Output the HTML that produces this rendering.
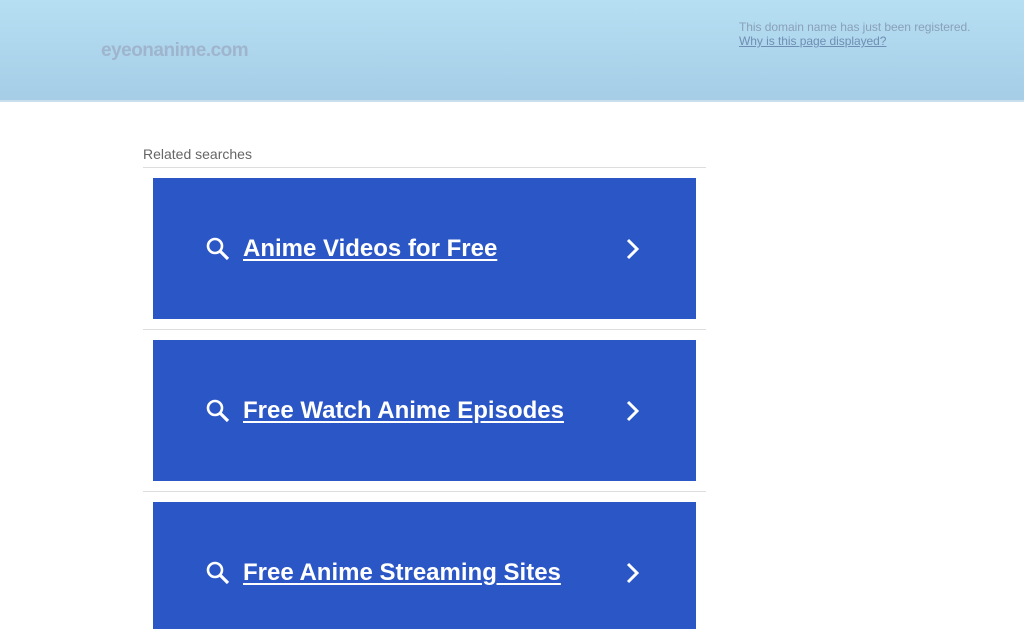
<!DOCTYPE html>
<html style="overflow:hidden;height:629px"><head><style>
body{margin:0;width:1024px;height:629px;overflow:hidden;background:#fff;font-family:"Liberation Sans",Arial,sans-serif;position:relative;}
.hdr{position:absolute;left:0;top:0;width:1024px;height:100px;background:linear-gradient(#b6dff3,#a5cde6);border-bottom:2px solid #c9dfee;}
.logo{position:absolute;left:101px;top:40px;font-size:19px;font-weight:bold;color:#9fb5ce;letter-spacing:-0.5px;}
.info{position:absolute;left:739px;top:20px;font-size:12px;line-height:14px;color:#8aa0b8;letter-spacing:-0.05px;}
.info a{color:#6f8eb3;text-decoration:underline;}
.rel{position:absolute;left:143px;top:146px;font-size:14px;color:#666;}
.line{position:absolute;left:143px;width:563px;height:1px;background:#ddd;}
.card{position:absolute;left:153px;width:543px;height:141px;background:#2b56c6;overflow:hidden;}
.card .t{position:absolute;left:90px;top:57px;font-size:24px;font-weight:bold;color:#fff;text-decoration:underline;text-underline-offset:3px;}
.card svg{position:absolute}
</style></head><body>
<div class="hdr"><div class="logo">eyeonanime.com</div>
<div class="info">This domain name has just been registered.<br><a>Why is this page displayed?</a></div></div>
<div class="rel">Related searches</div>
<div class="line" style="top:167px"></div>
<div class="line" style="top:329px"></div>
<div class="line" style="top:491px"></div>
<div class="card" style="top:178px"><svg style="left:52px;top:58px" width="26" height="26" viewBox="0 0 26 26"><circle cx="10" cy="10" r="7" fill="none" stroke="#fff" stroke-width="2.6"/><path d="M15 15l8 8" stroke="#fff" stroke-width="3.2"/></svg><div class="t">Anime Videos for Free</div><svg style="left:472px;top:60px" width="16" height="22" viewBox="0 0 16 22"><path d="M3 2l9 9-9 9" fill="none" stroke="#fff" stroke-width="3"/></svg></div>
<div class="card" style="top:340px"><svg style="left:52px;top:58px" width="26" height="26" viewBox="0 0 26 26"><circle cx="10" cy="10" r="7" fill="none" stroke="#fff" stroke-width="2.6"/><path d="M15 15l8 8" stroke="#fff" stroke-width="3.2"/></svg><div class="t">Free Watch Anime Episodes</div><svg style="left:472px;top:60px" width="16" height="22" viewBox="0 0 16 22"><path d="M3 2l9 9-9 9" fill="none" stroke="#fff" stroke-width="3"/></svg></div>
<div class="card" style="top:502px;height:127px"><svg style="left:52px;top:58px" width="26" height="26" viewBox="0 0 26 26"><circle cx="10" cy="10" r="7" fill="none" stroke="#fff" stroke-width="2.6"/><path d="M15 15l8 8" stroke="#fff" stroke-width="3.2"/></svg><div class="t">Free Anime Streaming Sites</div><svg style="left:472px;top:60px" width="16" height="22" viewBox="0 0 16 22"><path d="M3 2l9 9-9 9" fill="none" stroke="#fff" stroke-width="3"/></svg></div>
</body></html>
